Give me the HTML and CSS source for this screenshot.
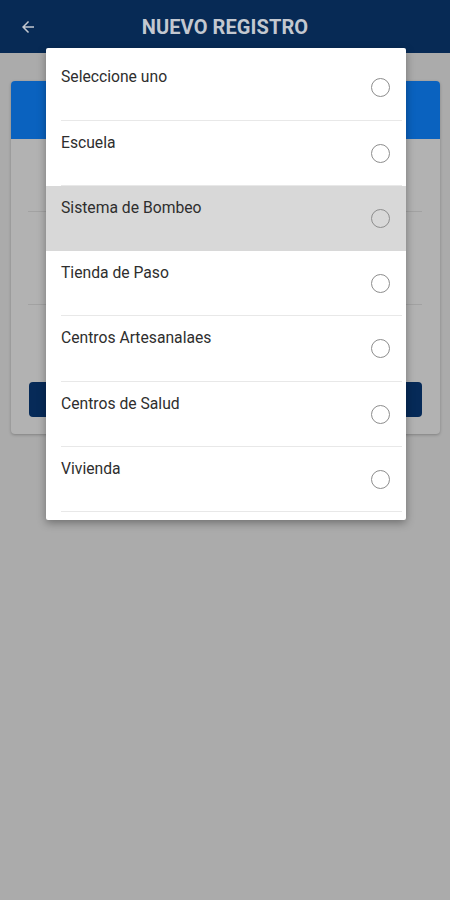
FILE: index.html
```html
<!DOCTYPE html>
<html lang="es">
<head>
    <meta charset="UTF-8">
    <meta name="viewport" content="width=device-width, initial-scale=1.0">
    <title>Nuevo Registro</title>
    <link rel="stylesheet" href="styles.css">
</head>
<body>
    <!-- Pantalla de fondo (atenuada por el diálogo) -->
    <header class="app-bar">
        <svg class="back" width="18" height="18" viewBox="0 0 24 24">
            <path d="M20 11H7.83l5.59-5.59L12 4l-8 8 8 8 1.41-1.41L7.83 13H20v-2z" fill="currentColor"/>
        </svg>
        <h1>NUEVO REGISTRO</h1>
    </header>

    <div class="card">
        <div class="card-head"></div>
        <div class="card-body">
            <div class="field f1"></div>
            <div class="field f2"></div>
            <div class="field f3"></div>
            <div class="btn"></div>
        </div>
    </div>

    <!-- Diálogo de selección -->
    <div class="dialog">
        <div class="option"><div class="row"><span>Seleccione uno</span><i class="radio"></i></div></div>
        <div class="option"><div class="row"><span>Escuela</span><i class="radio"></i></div></div>
        <div class="option pressed"><div class="row"><span>Sistema de Bombeo</span><i class="radio"></i></div></div>
        <div class="option"><div class="row"><span>Tienda de Paso</span><i class="radio"></i></div></div>
        <div class="option"><div class="row"><span>Centros Artesanalaes</span><i class="radio"></i></div></div>
        <div class="option"><div class="row"><span>Centros de Salud</span><i class="radio"></i></div></div>
        <div class="option"><div class="row"><span>Vivienda</span><i class="radio"></i></div></div>
    </div>
</body>
</html>
```

FILE: styles.css
```css
body {
    margin: 0;
    width: 450px;
    height: 900px;
    background-color: #ababab;
    font-family: Roboto, "Liberation Sans", sans-serif;
    position: relative;
    overflow: hidden;
}
.app-bar {
    height: 53px;
    background-color: #072a55;
    color: #c3c8d0;
    display: flex;
    align-items: center;
    padding: 0 0 0 19px;
}
.app-bar .back {
    flex: none;
}
.app-bar h1 {
    flex: 1;
    margin: 0 37px 0 0;
    font-size: 20px;
    font-weight: 700;
    text-align: center;
    letter-spacing: 0.1px;
}
.card {
    margin: 28px 10px 0 11px;
    background-color: #b2b2b2;
    border-radius: 4px;
    box-shadow: 0 1px 3px rgba(0, 0, 0, 0.25);
}
.card-head {
    height: 58px;
    background-color: #0a62bf;
    border-radius: 4px 4px 0 0;
}
.card-body {
    padding: 0 18px 17px 17px;
}
.field {
    box-sizing: border-box;
    border-bottom: 1px solid #a2a2a2;
}
.f1 {
    height: 73px;
}
.f2 {
    height: 93px;
}
.f3 {
    height: 77px;
    border-bottom: none;
}
.btn {
    height: 35px;
    margin-left: 1px;
    background-color: #062a58;
    border-radius: 4px;
}
.dialog {
    position: absolute;
    left: 46px;
    top: 48px;
    width: 360px;
    padding: 7px 0 8px;
    background-color: #fff;
    border-radius: 2px;
    box-shadow: 0 3px 8px rgba(0, 0, 0, 0.35);
}
.option {
    height: 65.3px;
    box-sizing: border-box;
    padding-left: 15px;
}
.option:first-child {
    height: 65.5px;
}
.option.pressed {
    background-color: #d8d8d8;
}
.row {
    height: 100%;
    box-sizing: border-box;
    margin-right: 4px;
    padding-right: 12px;
    border-bottom: 1px solid #e8e8e8;
    display: flex;
    justify-content: space-between;
    align-items: flex-start;
}
.pressed .row {
    border-bottom-color: transparent;
}
.row span {
    padding-top: 13px;
    font-size: 15.7px;
    line-height: 18px;
    color: #2e2e2e;
}
.radio {
    width: 19px;
    height: 19px;
    box-sizing: border-box;
    margin-top: 23px;
    border: 1.6px solid #8d8d8d;
    border-radius: 50%;
}
```
